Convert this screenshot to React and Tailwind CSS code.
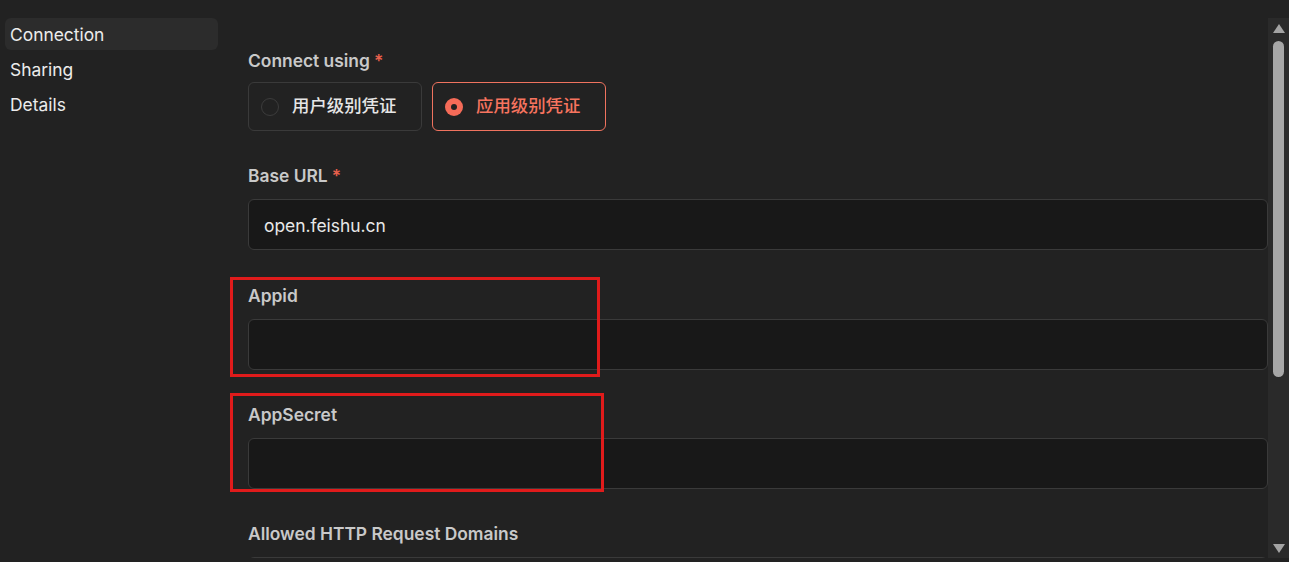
import React from 'react';

const font = { fontFamily: 'Inter, "Noto Sans CJK SC", sans-serif' };

const Label = ({ children, required }) => (
  <div className="h-6 leading-6 pt-px text-[17.4px] font-semibold text-[#c9c9c9]">
    {children}
    {required && <span className="ml-1 text-[#e8604c]">*</span>}
  </div>
);

const TextField = ({ label, required, value }) => (
  <div className="flex flex-col gap-3">
    <Label required={required}>{label}</Label>
    <div className="h-[51px] rounded-md border border-[#3a3a3a] bg-[#181818] px-[15px] pt-[3px] flex items-center text-[17.4px] text-[#e8e8e8]">
      {value}
    </div>
  </div>
);

const Radio = ({ label, checked }) => (
  <div
    className={`w-[174px] h-[49px] rounded-md border flex items-center pl-[12px] gap-[13px] ${
      checked ? 'border-[#f0735f]' : 'border-[#3a3a3a]'
    }`}
  >
    {checked ? (
      <span className="w-[18px] h-[18px] rounded-full bg-[#f56b58] flex items-center justify-center">
        <span className="w-[6px] h-[6px] rounded-full bg-[#222222]" />
      </span>
    ) : (
      <span className="w-[18px] h-[18px] rounded-full border-[1.5px] border-[#3c3c3c]" />
    )}
    <span className={`text-[17.4px] font-medium ${checked ? 'text-[#f7745f]' : 'text-[#e6e6e6]'}`}>
      {label}
    </span>
  </div>
);

export default function App() {
  const navItems = ['Connection', 'Sharing', 'Details'];

  return (
    <div className="w-[1289px] h-[562px] bg-[#222222] flex overflow-hidden" style={font}>
      {/* Sidebar */}
      <div className="w-[230px] shrink-0 pl-[5px] pr-[12px] pt-[18px] flex flex-col gap-[3px]">
        {navItems.map((item, i) => (
          <div
            key={item}
            className={`h-8 rounded-md pl-[5px] pt-[2px] flex items-center text-[17.4px] text-[#ececec] ${
              i === 0 ? 'bg-[#2c2c2c]' : ''
            }`}
          >
            {item}
          </div>
        ))}
      </div>

      {/* Main form */}
      <div className="flex-1 mt-[18px] h-[540px] flex overflow-hidden">
        <div className="relative flex-1 pl-[18px] pt-[30px] flex flex-col gap-8">
          <div className="flex flex-col gap-[10px]">
            <Label required>Connect using</Label>
            <div className="flex gap-[10px]">
              <Radio label="用户级别凭证" />
              <Radio label="应用级别凭证" checked />
            </div>
          </div>

          <TextField label="Base URL" required value="open.feishu.cn" />

          <div className="relative mt-px">
            <TextField label="Appid" />
            <div className="absolute left-[-18px] top-[-6px] w-[370px] h-[100px] border-[3px] border-[#e01b1b]" />
          </div>

          <div className="relative">
            <TextField label="AppSecret" />
            <div className="absolute left-[-18px] top-[-9px] w-[374px] h-[99px] border-[3px] border-[#e01b1b]" />
          </div>

          <TextField label="Allowed HTTP Request Domains" />
        </div>

        {/* Scrollbar */}
        <div className="w-[21px] shrink-0 bg-[#2a2a2a] flex flex-col items-center">
          <svg width="12" height="9" viewBox="0 0 12 9" className="mt-[6px]">
            <path d="M6 0 L12 9 L0 9 Z" fill="#a3a3a3" />
          </svg>
          <div className="mt-[8px] w-[11px] h-[336px] rounded-full bg-[#a6a6a6]" />
          <div className="flex-1" />
          <svg width="12" height="9" viewBox="0 0 12 9" className="mb-[5px]">
            <path d="M0 0 L12 0 L6 9 Z" fill="#a3a3a3" />
          </svg>
        </div>
      </div>
    </div>
  );
}
